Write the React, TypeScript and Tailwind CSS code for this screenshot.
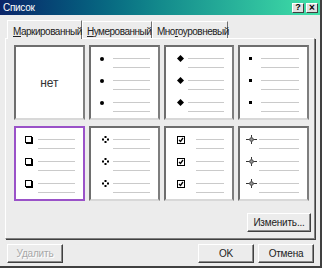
import React from "react";

const FONT = { fontFamily: '"Liberation Sans", Arial, sans-serif' };

function Round() {
  return <div className="w-[4px] h-[4px] rounded-full bg-black" />;
}
function Diamond() {
  return (
    <svg width="7" height="7" viewBox="0 0 7 7">
      <path d="M3.5 0 L7 3.5 L3.5 7 L0 3.5 Z" fill="#000" />
    </svg>
  );
}
function SmallSquare() {
  return <div className="w-[3px] h-[3px] bg-black" />;
}
function Box() {
  return (
    <svg width="8" height="8" viewBox="0 0 8 8">
      <rect x="0.5" y="0.5" width="6" height="6" fill="#fff" stroke="#000" />
      <rect x="7" y="1" width="1" height="7" fill="#000" />
      <rect x="1" y="7" width="7" height="1" fill="#000" />
    </svg>
  );
}
function FourDots() {
  return (
    <svg width="7" height="7" viewBox="0 0 7 7">
      <rect x="2.5" y="0" width="2" height="2" fill="#000" />
      <rect x="0" y="2.5" width="2" height="2" fill="#000" />
      <rect x="5" y="2.5" width="2" height="2" fill="#000" />
      <rect x="2.5" y="5" width="2" height="2" fill="#000" />
    </svg>
  );
}
function CheckBox() {
  return (
    <svg width="8" height="8" viewBox="0 0 8 8">
      <rect x="0.5" y="0.5" width="7" height="7" fill="#fff" stroke="#000" />
      <path d="M2 4 L3.5 5.5 L6 2" stroke="#000" strokeWidth="1.3" fill="none" />
    </svg>
  );
}
function Cross() {
  return (
    <svg width="11" height="9" viewBox="0 0 11 9">
      <rect x="0" y="4" width="11" height="1" fill="#333" />
      <rect x="5" y="0" width="1" height="9" fill="#333" />
      <path d="M5.5 1.5 L8.5 4.5 L5.5 7.5 L2.5 4.5 Z" fill="#555" />
      <circle cx="5.5" cy="4.5" r="1.2" fill="#999" />
    </svg>
  );
}

type CellProps = {
  bullet?: React.ReactNode;
  bulletCol?: string;
  selected?: boolean;
  none?: boolean;
};

function Cell({ bullet, bulletCol = "w-[20px] pl-[8px]", selected, none }: CellProps) {
  const border = selected
    ? "border-2 border-[#9a52c8]"
    : "border-2 border-t-[#6e6e6e] border-l-[#6e6e6e] border-r-[#7e7e7e] border-b-[#d8d8d8]";
  return (
    <div className={`h-[75px] bg-white ${border}`}>
      {none ? (
        <div className="h-full flex items-center justify-center text-[12px] text-[#333]">нет</div>
      ) : (
        <div className="flex flex-col gap-[9px] pt-[8px]">
          {[0, 1, 2].map((i) => (
            <div key={i} className="flex flex-col">
              <div className="flex items-center h-[7px]">
                <div className={`flex items-center ${bulletCol}`}>{bullet}</div>
                <div className="flex-1 mr-[8px] h-px bg-[#cacaca]" />
              </div>
              <div className="flex mt-[5px]">
                <div className={bulletCol} />
                <div className="flex-1 mr-[8px] h-px bg-[#cacaca]" />
              </div>
            </div>
          ))}
        </div>
      )}
    </div>
  );
}

function Btn({ children, className = "", disabled }: { children: React.ReactNode; className?: string; disabled?: boolean }) {
  return (
    <div
      className={`h-[19px] flex items-center justify-center text-[10px] tracking-[-0.2px] bg-[#ececec] border border-t-white border-l-white border-r-[#404040] border-b-[#404040] shadow-[inset_-1px_-1px_0_#8a8a8a] ${
        disabled ? "text-[#a8a8a8] [text-shadow:1px_1px_0_#fff]" : "text-[#222]"
      } ${className}`}
    >
      {children}
    </div>
  );
}

function Tab({ children, selected, className = "" }: { children: React.ReactNode; selected?: boolean; className?: string }) {
  return (
    <div
      className={`flex items-center pt-[2px] border-l border-t border-l-white border-t-white border-r border-r-[#707070] text-[10px] tracking-[-0.5px] text-[#222] ${
        selected ? "h-[19px] bg-[#ececec] relative z-10 -mb-px" : "h-[17px]"
      } ${className}`}
    >
      {children}
    </div>
  );
}

export default function App() {
  return (
    <div
      style={FONT}
      className="w-[322px] h-[268px] bg-[#ececec] flex flex-col border-r-2 border-b-2 border-r-[#404040] border-b-[#404040] overflow-hidden"
    >
      <div className="h-[15px] flex items-center justify-between bg-gradient-to-r from-[#0b2468] via-[#138a8c] to-[#41e2a8] pl-[3px] pr-[2px]">
        <span className="text-white text-[10px] tracking-[-0.3px]">Список</span>
        <div className="flex gap-[2px]">
          <div className="w-[12px] h-[10px] bg-[#e0e0e0] border border-t-white border-l-white border-r-[#404040] border-b-[#404040] flex items-center justify-center text-[9px] font-bold leading-none">?</div>
          <div className="w-[12px] h-[10px] bg-[#e0e0e0] border border-t-white border-l-white border-r-[#404040] border-b-[#404040] flex items-center justify-center text-[10px] font-bold leading-none">×</div>
        </div>
      </div>

      <div className="flex items-end h-[23px] pl-[7px]">
        <Tab selected className="w-[75px] pl-[5px]">
          <span><u>М</u>аркированный</span>
        </Tab>
        <Tab className="w-[70px] pl-[4px]">
          <span><u>Н</u>умерованный</span>
        </Tab>
        <Tab className="w-[76px] pl-[4px]">
          <span>Мно<u>г</u>оуровневый</span>
        </Tab>
      </div>

      <div className="ml-[5px] w-[310px] h-[201px] border-l border-t border-l-white border-t-white border-r border-b border-r-[#808080] border-b-[#808080] shadow-[1px_1px_0_#404040] pl-[8px] pt-[6px] flex flex-col">
        <div className="grid grid-cols-4 gap-x-[4px] gap-y-[6px] w-[295px]">
          <Cell none />
          <Cell bullet={<Round />} bulletCol="w-[22px] pl-[9px]" />
          <Cell bullet={<Diamond />} bulletCol="w-[22px] pl-[11px]" />
          <Cell bullet={<SmallSquare />} bulletCol="w-[21px] pl-[9px]" />
          <Cell selected bullet={<Box />} bulletCol="w-[22px] pl-[9px]" />
          <Cell bullet={<FourDots />} bulletCol="w-[22px] pl-[11px]" />
          <Cell bullet={<CheckBox />} bulletCol="w-[30px] pl-[11px]" />
          <Cell bullet={<Cross />} bulletCol="w-[19px] pl-[6px]" />
        </div>
        <div className="flex justify-end mt-[12px] pr-[3px]">
          <Btn className="w-[64px]">Изменить...</Btn>
        </div>
      </div>

      <div className="flex items-center mt-[5px] pl-[7px] pr-[6px]">
        <Btn disabled className="w-[56px]">Удалить</Btn>
        <div className="flex-1" />
        <Btn className="w-[56px] mr-[4px]">OK</Btn>
        <Btn className="w-[56px]">Отмена</Btn>
      </div>
    </div>
  );
}
